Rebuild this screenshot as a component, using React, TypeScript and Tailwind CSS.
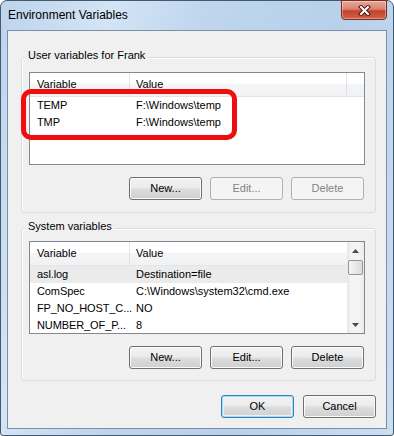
import React from 'react';
import clsx from 'clsx';

type Row = { name: string; value: string; selected?: boolean };

const userVars: Row[] = [
  { name: 'TEMP', value: 'F:\\Windows\\temp' },
  { name: 'TMP', value: 'F:\\Windows\\temp' },
];

const systemVars: Row[] = [
  { name: 'asl.log', value: 'Destination=file', selected: true },
  { name: 'ComSpec', value: 'C:\\Windows\\system32\\cmd.exe' },
  { name: 'FP_NO_HOST_C...', value: 'NO' },
  { name: 'NUMBER_OF_P...', value: '8' },
];

interface BtnProps {
  label: string;
  disabled?: boolean;
  primary?: boolean;
}

const Btn: React.FC<BtnProps> = ({ label, disabled, primary }) => (
  <button
    disabled={disabled}
    className={clsx(
      'h-[23px] w-[73px] rounded-[3px] border text-[11px] leading-none',
      disabled
        ? 'border-[#adb2b5] bg-[#f4f4f4] text-[#838383]'
        : 'bg-[linear-gradient(#f3f3f3,#ebebeb_48%,#dddddd_52%,#cfcfcf)] text-black',
      !disabled && !primary && 'border-[#707070] shadow-[inset_0_0_0_1px_#fbfbfb]',
      primary && 'border-[#3c7fb1] shadow-[inset_0_0_0_1px_#9fdcf6,inset_0_0_0_2px_#e4f4fc]'
    )}
  >
    {label}
  </button>
);

const Group: React.FC<{ title: string; className?: string; children: React.ReactNode }> = ({
  title,
  className,
  children,
}) => (
  <div
    className={clsx(
      'relative rounded-[3px] border border-[#d5dfe5] pl-[7px] pr-[10px] shadow-[inset_1px_1px_0_#ffffff]',
      className
    )}
  >
    <span className="absolute -top-[10px] left-[4px] bg-[#f0f0f0] px-[2px] leading-[15px]">{title}</span>
    {children}
  </div>
);

const Header: React.FC<{ filler?: boolean }> = ({ filler }) => (
  <div className="flex h-[24px] shrink-0 border-b border-[#e3e5e8] bg-[linear-gradient(#ffffff,#ffffff_45%,#f4f5f7_50%,#f1f2f4)]">
    <div className="flex w-[100px] items-center border-r border-[#e0e4ea] pl-[7px]">Variable</div>
    <div className={clsx('flex items-center pl-[6px]', filler ? 'w-[217px] border-r border-[#e0e4ea]' : 'flex-1')}>
      Value
    </div>
    {filler && <div className="flex-1" />}
  </div>
);

const Rows: React.FC<{ rows: Row[] }> = ({ rows }) => (
  <div>
    {rows.map((r) => (
      <div key={r.name} className={clsx('flex h-[17px] items-center', r.selected && 'bg-[#ebebeb]')}>
        <div className="w-[100px] shrink-0 whitespace-nowrap pl-[7px] tracking-[-0.1px]">{r.name}</div>
        <div className="flex-1 whitespace-nowrap pl-[6px]">{r.value}</div>
      </div>
    ))}
  </div>
);

const Scrollbar: React.FC = () => (
  <div className="flex w-[17px] shrink-0 flex-col bg-[linear-gradient(90deg,#e6e6e6,#f4f4f4_25%,#f4f4f4_75%,#eaeaea)]">
    <div className="flex h-[17px] shrink-0 items-center justify-center">
      <svg width="7" height="4" viewBox="0 0 7 4">
        <path d="M0 4 L3.5 0 L7 4 Z" fill="#4a4a4a" />
      </svg>
    </div>
    <div className="mx-px mt-px h-[15px] shrink-0 rounded-[2px] border border-[#979797] bg-[linear-gradient(90deg,#f4f4f4,#e8e8e8_50%,#dcdcdc)]" />
    <div className="flex-1" />
    <div className="flex h-[17px] shrink-0 items-center justify-center">
      <svg width="7" height="4" viewBox="0 0 7 4">
        <path d="M0 0 L3.5 4 L7 0 Z" fill="#4a4a4a" />
      </svg>
    </div>
  </div>
);

export default function App() {
  return (
    <div className="min-h-screen bg-white font-['Liberation_Sans',Arial,sans-serif] text-[11px] text-black">
      <div className="relative flex h-[436px] w-[394px] flex-col rounded-t-[7px] rounded-b-[3px] border border-[#44586e] bg-[linear-gradient(105deg,#bdd4ec_0%,#d3e4f5_22%,#bed5ed_42%,#b8d0ea_68%,#cbdef2_100%)] px-[6px] pb-[6px]">
        {/* title bar */}
        <div className="flex h-[29px] shrink-0 items-start justify-between">
          <span className="pl-px pt-[7px] text-[12px] leading-[15px]">Environment Variables</span>
          <button className="-mt-px flex h-[20px] w-[46px] items-center justify-center rounded-b-[4px] border border-[#7a2a1e] bg-[linear-gradient(#e8a99c,#d9836f_45%,#c5432c_55%,#d0604a)] shadow-[inset_0_0_0_1px_rgba(255,255,255,0.35)]">
            <svg width="13" height="11" viewBox="0 0 13 11">
              <path d="M3 2 L10 9 M10 2 L3 9" stroke="#4a1810" strokeWidth="4" strokeLinecap="square" />
              <path d="M3 2 L10 9 M10 2 L3 9" stroke="#ffffff" strokeWidth="2" strokeLinecap="square" />
            </svg>
          </button>
        </div>

        {/* client area */}
        <div className="flex flex-1 flex-col border border-[#7b8fa5] bg-[#f0f0f0] pl-[13px] pr-[10px] pt-[26px]">
          <Group title="User variables for Frank" className="pb-[12px] pt-[14px]">
            <div className="flex h-[93px] flex-col overflow-hidden border border-[#828790] bg-white">
              <Header filler />
              <Rows rows={userVars} />
            </div>
            <div className="mt-[12px] flex justify-end gap-[8px] pr-px">
              <Btn label="New..." />
              <Btn label="Edit..." disabled />
              <Btn label="Delete" disabled />
            </div>
          </Group>

          <Group title="System variables" className="mt-[15px] pb-[11px] pt-[12px]">
            <div className="flex h-[93px] overflow-hidden border border-[#828790] bg-white">
              <div className="flex flex-1 flex-col">
                <Header />
                <Rows rows={systemVars} />
              </div>
              <Scrollbar />
            </div>
            <div className="mt-[12px] flex justify-end gap-[8px] pr-px">
              <Btn label="New..." />
              <Btn label="Edit..." />
              <Btn label="Delete" />
            </div>
          </Group>

          <div className="mt-[14px] flex justify-end gap-[9px]">
            <Btn label="OK" primary />
            <Btn label="Cancel" />
          </div>
        </div>

        {/* red annotation around the user variables */}
        <div className="pointer-events-none absolute left-[20px] top-[88px] h-[51px] w-[216px] rounded-[10px] border-[5px] border-[#f00d0d]" />
      </div>
    </div>
  );
}
